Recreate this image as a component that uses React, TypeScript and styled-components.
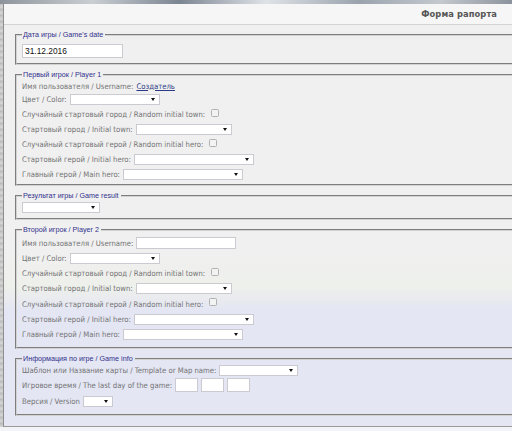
import React from 'react';
import styled, { createGlobalStyle } from 'styled-components';

const GlobalStyle = createGlobalStyle`
  html, body {
    margin: 0;
    padding: 0;
    background: #ffffff;
    overflow: hidden;
  }
`;

const Page = styled.div`
  width: 512px;
  height: 431px;
  display: flex;
  flex-direction: column;
  overflow: hidden;
`;

const Banner = styled.div`
  height: 4px;
  flex: none;
  background: linear-gradient(90deg, #8d949b 0%, #c9ced3 18%, #7b8591 35%, #dfe3e8 52%, #9aa3ad 70%, #c4c9cf 86%, #8b939c 100%);
`;

const Body = styled.div`
  display: flex;
  flex: none;
`;

const Strip = styled.div`
  width: 3px;
  flex: none;
  background: repeating-linear-gradient(180deg, #c2c2c2 0, #d6d6d6 3px, #b7b7b7 6px);
`;

const Panel = styled.div`
  flex: 1;
  border-left: 1px solid #8e8e8e;
  border-bottom: 1px solid #9a9a9a;
  display: flex;
  flex-direction: column;
  min-width: 0;
`;

const Header = styled.div`
  height: 20px;
  display: flex;
  align-items: center;
  justify-content: flex-end;
  padding-right: 15px;
  background: #f6f6f6;
  border-bottom: 1px solid #d4d4d4;
`;

const Title = styled.h1`
  margin: 0;
  font-family: "DejaVu Sans", Verdana, sans-serif;
  font-weight: bold;
  font-size: 8.3px;
  color: #555555;
  letter-spacing: 0.1px;
`;

const Content = styled.div`
  padding: 5px 0 10px 11px;
  background: linear-gradient(180deg, #f0f0f0 0px, #f0f0f0 230px, #eef0eb 262px, #e4e6f3 285px, #e4e6f3 100%);
`;

const Set = styled.fieldset<{ $pt?: number; $pb?: number }>`
  width: 520px;
  box-sizing: border-box;
  margin: 0 0 5px 0;
  padding: ${({ $pt }) => $pt ?? 1}px 0 ${({ $pb }) => $pb ?? 2}px 5px;
  border: 2px groove #d2d2d2;
  border-right: none;
  min-width: 0;
  &:last-child {
    margin-bottom: 0;
  }
`;

const Legend = styled.legend`
  padding: 0 2px 0 1px;
  font-family: "Liberation Sans", Arial, sans-serif;
  font-size: 7.2px;
  line-height: 9px;
  color: #30308c;
`;

const Row = styled.div<{ $h: number }>`
  height: ${({ $h }) => $h}px;
  display: flex;
  align-items: center;
`;

const Label = styled.span`
  font-family: "DejaVu Sans Condensed", "DejaVu Sans", Verdana, sans-serif;
  font-size: 7.7px;
  color: #737373;
  margin-right: 3px;
  white-space: nowrap;
`;

const UserLink = styled.a`
  font-family: "DejaVu Sans Condensed", "DejaVu Sans", Verdana, sans-serif;
  font-size: 7.7px;
  color: #2c3a86;
  text-decoration: underline;
`;

const Select = styled.div<{ $w: number }>`
  width: ${({ $w }) => $w}px;
  height: 11px;
  box-sizing: border-box;
  flex: none;
  background: #ffffff;
  border: 1px solid #cacad0;
  display: flex;
  align-items: center;
  justify-content: flex-end;
  padding-right: 4px;
`;

const Arrow = styled.span`
  width: 0;
  height: 0;
  border-left: 2px solid transparent;
  border-right: 2px solid transparent;
  border-top: 3px solid #111111;
`;

const TextBox = styled.input<{ $w: number; $h: number; $gap?: number }>`
  width: ${({ $w }) => $w}px;
  height: ${({ $h }) => $h}px;
  box-sizing: border-box;
  flex: none;
  margin: 0 ${({ $gap }) => $gap ?? 0}px 0 0;
  padding: 0 2px;
  background: #ffffff;
  border: 1px solid #cacad0;
  font-family: "Liberation Sans", Arial, sans-serif;
  font-size: 8.4px;
  color: #111111;
  outline: none;
`;

const Check = styled.span`
  width: 6px;
  height: 6px;
  flex: none;
  margin: 0 0 4px 3px;
  border: 1px solid #b0b0b0;
  border-radius: 1.5px;
  background: #f3f3f3;
`;

const Footer = styled.div`
  height: 4px;
  flex: none;
  background: #f3f4f8;
  border-bottom: 1px solid #3d4250;
`;

const Sel = ({ w }: { w: number }) => (
  <Select $w={w}>
    <Arrow />
  </Select>
);

const PlayerRows = ({ second }: { second?: boolean }) => (
  <>
    <Row $h={second ? 14 : 12}>
      <Label>Имя пользователя / Username:</Label>
      {second ? <TextBox $w={100} $h={12} readOnly /> : <UserLink href="#">Создатель</UserLink>}
    </Row>
    <Row $h={second ? 16 : 15}>
      <Label>Цвет / Color:</Label>
      <Sel w={90} />
    </Row>
    <Row $h={15}>
      <Label>Случайный стартовый город / Random initial town:</Label>
      <Check />
    </Row>
    <Row $h={15}>
      <Label>Стартовый город / Initial town:</Label>
      <Sel w={96} />
    </Row>
    <Row $h={second ? 16 : 15}>
      <Label>Случайный стартовый герой / Random initial hero:</Label>
      <Check />
    </Row>
    <Row $h={15}>
      <Label>Стартовый герой / Initial hero:</Label>
      <Sel w={120} />
    </Row>
    <Row $h={15}>
      <Label>Главный герой / Main hero:</Label>
      <Sel w={120} />
    </Row>
  </>
);

export default function App() {
  return (
    <Page>
      <GlobalStyle />
      <Banner />
      <Body>
        <Strip />
        <Panel>
          <Header>
            <Title>Форма рапорта</Title>
          </Header>
          <Content>
            <Set $pt={1} $pb={5}>
              <Legend>Дата игры / Game's date</Legend>
              <TextBox $w={101} $h={14} defaultValue="31.12.2016" />
            </Set>

            <Set $pt={1} $pb={2}>
              <Legend>Первый игрок / Player 1</Legend>
              <PlayerRows />
            </Set>

            <Set $pt={2} $pb={5}>
              <Legend>Результат игры / Game result</Legend>
              <Sel w={78} />
            </Set>

            <Set $pt={2} $pb={5}>
              <Legend>Второй игрок / Player 2</Legend>
              <PlayerRows second />
            </Set>

            <Set $pt={0} $pb={5}>
              <Legend>Информация по игре / Game info</Legend>
              <Row $h={14}>
                <Label>Шаблон или Название карты / Template or Map name:</Label>
                <Sel w={79} />
              </Row>
              <Row $h={16}>
                <Label>Игровое время / The last day of the game:</Label>
                <TextBox $w={23} $h={14} $gap={3} readOnly />
                <TextBox $w={23} $h={14} $gap={3} readOnly />
                <TextBox $w={23} $h={14} readOnly />
              </Row>
              <Row $h={16}>
                <Label>Версия / Version</Label>
                <Sel w={30} />
              </Row>
            </Set>
          </Content>
        </Panel>
      </Body>
      <Footer />
    </Page>
  );
}
